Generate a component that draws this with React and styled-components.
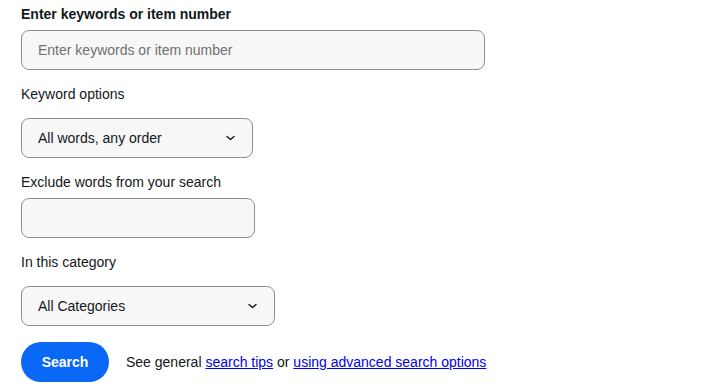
import React from 'react';
import styled, { createGlobalStyle } from 'styled-components';

const GlobalStyle = createGlobalStyle`
  body {
    margin: 0;
    background: #fff;
    font-family: "Liberation Sans", Arial, sans-serif;
    color: #111820;
  }
`;

const Form = styled.form`
  display: flex;
  flex-direction: column;
  align-items: flex-start;
  padding: 6px 21px;
  font-size: 14px;
`;

const Field = styled.div`
  display: flex;
  flex-direction: column;
  gap: ${(p) => (p.$loose ? '16px' : '8px')};
  margin-bottom: 16px;
`;

const Label = styled.label`
  font-size: 14px;
  line-height: 16px;
  font-weight: ${(p) => (p.$bold ? 700 : 400)};
  color: #111820;
`;

const TextInput = styled.input`
  box-sizing: border-box;
  width: ${(p) => p.$width}px;
  height: 40px;
  padding: 0 16px;
  border: 1px solid #8f8f8f;
  border-radius: 8px;
  background: #f7f7f7;
  font-family: inherit;
  font-size: 14px;
  color: #111820;
  outline: none;

  &::placeholder {
    color: #707070;
  }
`;

const SelectWrap = styled.div`
  position: relative;
  width: ${(p) => p.$width}px;
`;

const Select = styled.select`
  box-sizing: border-box;
  width: 100%;
  height: 40px;
  padding: 0 40px 0 16px;
  border: 1px solid #8f8f8f;
  border-radius: 8px;
  background: #f7f7f7;
  font-family: inherit;
  font-size: 14px;
  color: #111820;
  appearance: none;
  outline: none;
`;

const Chevron = styled.svg`
  position: absolute;
  right: 18px;
  top: 50%;
  transform: translateY(-50%);
  pointer-events: none;
`;

const Actions = styled.div`
  display: flex;
  align-items: center;
  gap: 17px;
`;

const SearchButton = styled.button`
  width: 88px;
  height: 40px;
  border: none;
  border-radius: 20px;
  background: #0968f6;
  color: #fff;
  font-family: inherit;
  font-size: 14px;
  font-weight: 700;
  cursor: pointer;
`;

const Hint = styled.span`
  font-size: 14px;
  color: #111820;

  a {
    color: #0000ee;
    text-decoration: underline;
  }
`;

const Dropdown = ({ width, options }) => (
  <SelectWrap $width={width}>
    <Select defaultValue={options[0]}>
      {options.map((o) => (
        <option key={o}>{o}</option>
      ))}
    </Select>
    <Chevron width="9" height="6" viewBox="0 0 9 6" fill="none">
      <path d="M1 1.5l3.5 3 3.5-3" stroke="#111820" strokeWidth="1.4" strokeLinecap="round" strokeLinejoin="round" />
    </Chevron>
  </SelectWrap>
);

export default function App() {
  return (
    <>
      <GlobalStyle />
      <Form onSubmit={(e) => e.preventDefault()}>
        <Field>
          <Label $bold>Enter keywords or item number</Label>
          <TextInput $width={464} placeholder="Enter keywords or item number" />
        </Field>
        <Field $loose>
          <Label>Keyword options</Label>
          <Dropdown width={232} options={['All words, any order', 'Any words, any order', 'Exact words, exact order', 'Exact words, any order']} />
        </Field>
        <Field>
          <Label>Exclude words from your search</Label>
          <TextInput $width={234} />
        </Field>
        <Field $loose>
          <Label>In this category</Label>
          <Dropdown width={254} options={['All Categories']} />
        </Field>
        <Actions>
          <SearchButton type="submit">Search</SearchButton>
          <Hint>
            See general <a href="#">search tips</a> or <a href="#">using advanced search options</a>
          </Hint>
        </Actions>
      </Form>
    </>
  );
}
